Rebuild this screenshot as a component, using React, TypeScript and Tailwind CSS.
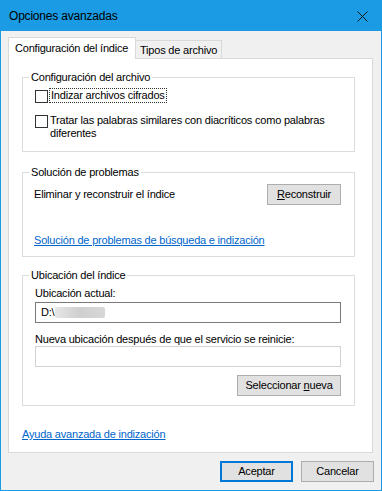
import React from 'react';

const font = { fontFamily: '"Liberation Sans", Arial, sans-serif' };

function Checkbox({ children, focused }: { children: React.ReactNode; focused?: boolean }) {
  return (
    <div className="flex items-start">
      <span className="mt-[1px] w-[13px] h-[13px] shrink-0 border border-[#333333] bg-white" />
      <span
        className={
          'ml-[2px] leading-[13px] ' +
          (focused ? 'outline outline-1 outline-dotted outline-[#333] px-[1px]' : '')
        }
      >
        {children}
      </span>
    </div>
  );
}

function WinButton({ children, def, className }: { children: React.ReactNode; def?: boolean; className?: string }) {
  return (
    <button
      className={
        'h-[21px] bg-[#e1e1e1] text-black flex items-center justify-center ' +
        (def ? 'border-2 border-[#0078d7] ' : 'border border-[#adadad] ') +
        (className ?? '')
      }
    >
      {children}
    </button>
  );
}

function Group({ title, children, className, inner }: { title: string; children: React.ReactNode; className?: string; inner?: string }) {
  return (
    <fieldset className={'w-[333px] border border-[#dcdcdc] ' + (className ?? '')}>
      <legend className="ml-[6px] px-[2px] leading-[16px]">{title}</legend>
      <div className={inner}>{children}</div>
    </fieldset>
  );
}

export default function App() {
  return (
    <div
      className="w-[382px] h-[491px] bg-[#f0f0f0] border-x border-b border-[#1a9be3] flex flex-col text-[11px] tracking-[-0.2px] text-black"
      style={font}
    >
      {/* Title bar */}
      <div className="h-[31px] -mx-px bg-[#1a9be3] flex items-center justify-between pl-[9px] pr-[14px]">
        <span className="text-[12px] tracking-[-0.2px] pt-[1px]">Opciones avanzadas</span>
        <svg width="11" height="11" viewBox="0 0 11 11" className="mt-[1px]">
          <path d="M0.5 0.5 L10.5 10.5 M10.5 0.5 L0.5 10.5" stroke="#1a1a1a" strokeWidth="1" />
        </svg>
      </div>

      {/* Tabs */}
      <div className="mt-[6px] ml-[7px] flex items-end h-[22px] -mb-px relative z-10">
        <div className="h-[22px] w-[128px] bg-white border-x border-t border-[#d9d9d9] flex items-center pl-[6px] pb-[1px]">
          Configuración del índice
        </div>
        <div className="h-[19px] w-[86px] bg-[#f0f0f0] border-t border-r border-b border-[#d9d9d9] flex items-center pl-[4px] pt-[1px]">
          Tipos de archivo
        </div>
      </div>

      {/* Panel */}
      <div className="ml-[7px] w-[365px] h-[395px] bg-white border border-[#d9d9d9] pl-[13px] pt-[10px] flex flex-col">
        <Group title="Configuración del archivo" inner="pl-[12px] pb-[11px]">
          <div className="mt-[4px]">
            <Checkbox focused>Indizar archivos cifrados</Checkbox>
          </div>
          <div className="mt-[11px]">
            <Checkbox>
              Tratar las palabras similares con diacríticos como palabras
              <br />
              diferentes
            </Checkbox>
          </div>
        </Group>

        <Group title="Solución de problemas" className="mt-[12px]" inner="pl-[11px] pr-[13px] pb-[8px]">
          <div className="mt-[4px] flex items-center justify-between">
            <span>Eliminar y reconstruir el índice</span>
            <WinButton className="w-[74px]">
              <span><u>R</u>econstruir</span>
            </WinButton>
          </div>
          <div className="mt-[27px] leading-[16px]">
            <a className="text-[#0066cc] underline">Solución de problemas de búsqueda e indización</a>
          </div>
        </Group>

        <Group title="Ubicación del índice" className="mt-[10px]" inner="pl-[12px] pr-[13px] pb-[9px]">
          <div className="mt-[2px] leading-[16px]">Ubicación actual:</div>
          <div className="mt-[1px] h-[21px] border border-[#7a7a7a] flex items-center pl-[5px]">
            <span>D:\</span>
            <span className="ml-[1px] h-[11px] w-[50px] bg-gradient-to-r from-[#e6e6e6] via-[#cfcfcf] to-[#d8d8d8] rounded-[2px]" />
          </div>
          <div className="mt-[8px] leading-[16px]">Nueva ubicación después de que el servicio se reinicie:</div>
          <div className="mt-[-1px] h-[21px] border border-[#d3d3d3]" />
          <div className="mt-[8px] flex justify-end">
            <WinButton className="w-[104px]">
              <span>Seleccionar <u>n</u>ueva</span>
            </WinButton>
          </div>
        </Group>

        <div className="mt-[20px] leading-[16px]">
          <a className="text-[#0066cc] underline">Ayuda avanzada de indización</a>
        </div>
      </div>

      {/* Footer */}
      <div className="mt-[8px] flex justify-end gap-[8px] pr-[7px]">
        <WinButton def className="w-[73px]">Aceptar</WinButton>
        <WinButton className="w-[73px]">Cancelar</WinButton>
      </div>
    </div>
  );
}
